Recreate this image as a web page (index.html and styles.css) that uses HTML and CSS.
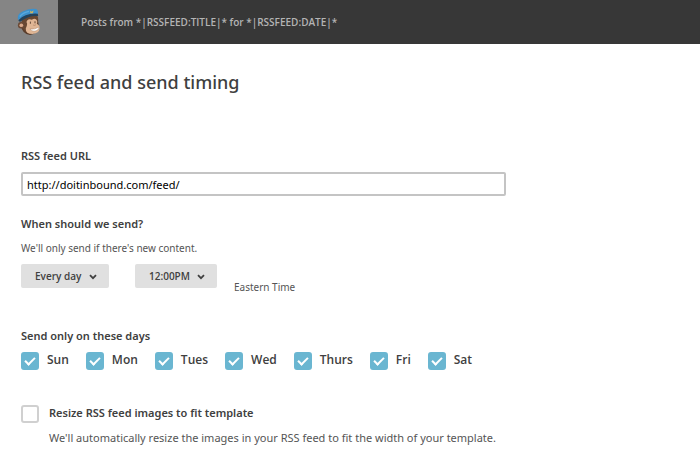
FILE: index.html
```html
<!DOCTYPE html>
<html lang="en">
<head>
<meta charset="utf-8">
<title>RSS feed and send timing</title>
<link rel="stylesheet" href="styles.css">
</head>
<body>
<header class="topbar">
  <a class="brand" href="#" aria-label="Home">
    <svg class="brand-logo" viewBox="0 0 26 30" aria-hidden="true">
      <ellipse cx="14" cy="18.500" rx="9.500" ry="10.500" fill="#5b3e2c"/>
      <path d="M5 14L8 8L22 8Q24 12 22 18L10 26Q5 23 5 14Z" fill="#684832"/>
      <circle cx="4.500" cy="18.500" r="3.500" fill="#6b4a36"/>
      <circle cx="4.700" cy="18.500" r="2" fill="#d9a98a"/>
      <path d="M11 13.500Q13 11 16 12.500Q20 10 21.500 13Q22.500 15 21.500 17Q25 19 24.500 22Q24 27 17 28Q9 28 9.500 22Q11 19 11 17Q9.500 15 11 13.500Z" fill="#e0b695"/>
      <path d="M14 22.500Q19 23.500 24 20.500Q23.500 24.500 18.500 25Q15.500 25 14 22.500Z" fill="#fff" stroke="#9a7052" stroke-width=".4"/>
      <path d="M14.500 15V16.500M19.500 14.600V16" stroke="#5b4232" stroke-width="1" stroke-linecap="round"/>
      <path d="M17.500 18.300Q19 19 20.500 18" fill="none" stroke="#9a7052" stroke-width=".6"/>
      <path d="M1 12Q0 6 6 3.500Q14-.5 21 1Q23.500 3 22.500 7Q12 5.500 4 14Z" fill="#3d91cc"/>
      <path d="M3 9Q7 4.500 13 3.500" fill="none" stroke="#5aa9dd" stroke-width="1.500"/>
      <path d="M1.500 13Q9 5 22.500 6L23 8.500Q12 7.500 4 14.500Q2 15 1.500 13Z" fill="#24435c"/>
      <path d="M14 2.500L15.500 4L18 2.500L17 5.500H14.500Z" fill="#d3b458"/>
    </svg>
  </a>
  <p class="campaign">Posts from *|RSSFEED:TITLE|* for *|RSSFEED:DATE|*</p>
</header>
<main class="page">
  <h1 class="title">RSS feed and send timing</h1>
  <form class="form">
    <div class="field">
      <label class="label" for="url">RSS feed URL</label>
      <input class="text-input" id="url" type="text" value="http://doitinbound.com/feed/">
    </div>
    <section class="timing">
      <h2 class="label">When should we send?</h2>
      <p class="hint">We'll only send if there's new content.</p>
      <div class="selects">
        <div class="select-wrap">
          <select class="select" aria-label="Frequency"><option>Every day</option></select>
          <svg class="chevron" viewBox="0 0 8 6" aria-hidden="true"><path d="M1 1.200L4 4.200L7 1.200"/></svg>
        </div>
        <div class="select-wrap">
          <select class="select" aria-label="Time"><option>12:00PM</option></select>
          <svg class="chevron" viewBox="0 0 8 6" aria-hidden="true"><path d="M1 1.200L4 4.200L7 1.200"/></svg>
        </div>
        <span class="zone">Eastern Time</span>
      </div>
    </section>
    <fieldset class="days">
      <legend class="label">Send only on these days</legend>
      <div class="day-list">
        <label class="day"><input class="check" type="checkbox" checked>Sun</label>
        <label class="day"><input class="check" type="checkbox" checked>Mon</label>
        <label class="day"><input class="check" type="checkbox" checked>Tues</label>
        <label class="day"><input class="check" type="checkbox" checked>Wed</label>
        <label class="day"><input class="check" type="checkbox" checked>Thurs</label>
        <label class="day"><input class="check" type="checkbox" checked>Fri</label>
        <label class="day"><input class="check" type="checkbox" checked>Sat</label>
      </div>
    </fieldset>
    <div class="resize">
      <input class="check" id="resize" type="checkbox" aria-describedby="resize-note">
      <div>
        <label class="label" for="resize">Resize RSS feed images to fit template</label>
        <p class="note" id="resize-note">We'll automatically resize the images in your RSS feed to fit the width of your template.</p>
      </div>
    </div>
  </form>
</main>
</body>
</html>
```
FILE: styles.css
```css
*,
*::before {
  box-sizing: border-box;
}

body {
  margin: 0;
  background: #fff;
  color: #404040;
  font: 11px/20px "Noto Sans", "Open Sans", sans-serif;
}

h1, h2, p, fieldset, legend {
  margin: 0;
  padding: 0;
  border: 0;
}

.topbar {
  display: flex;
  align-items: stretch;
  height: 44px;
  background: #373737;
}

.brand {
  display: flex;
  align-items: center;
  justify-content: center;
  width: 58px;
  background: #858585;
}

.brand-logo {
  width: 24px;
  height: 28px;
}

.campaign {
  padding: 12px 23px;
  color: #b4b4b4;
  font-family: "Open Sans", sans-serif;
  font-size: 10px;
  font-weight: 600;
}

.page {
  padding: 24px 21px 12px;
}

.title {
  font-size: 18px;
  font-weight: 500;
  line-height: 28px;
}

.form {
  margin-top: 50px;
}

.label {
  display: block;
  font-size: 11px;
  font-weight: 600;
  line-height: 20px;
}

.text-input {
  display: block;
  width: 100%;
  max-width: 485px;
  height: 24px;
  margin-top: 6px;
  padding: 0 4px;
  border: 2px solid #c4c4c4;
  border-radius: 2px;
  background: #fff;
  color: #000;
  font: inherit;
}

.timing {
  margin-top: 18px;
}

.hint {
  margin-top: 4px;
  color: #555;
  font-size: 10px;
}

.selects {
  display: flex;
  align-items: flex-start;
  margin-top: 6px;
}

.select-wrap {
  position: relative;
  margin-right: 26px;
}

.select-wrap + .select-wrap {
  margin-right: 17px;
}

.select {
  display: block;
  height: 24px;
  padding: 0 27px 0 14px;
  border: 0;
  border-radius: 2px;
  appearance: none;
  background: #e0e0e0;
  color: #404040;
  font: 600 10px/24px "Open Sans", sans-serif;
}

.chevron {
  position: absolute;
  top: 10px;
  right: 12px;
  width: 8px;
  height: 6px;
  fill: none;
  stroke: #404040;
  stroke-width: 1.8;
  pointer-events: none;
}

.zone {
  margin-top: 13px;
  color: #555;
  font-size: 10px;
}

.days {
  margin-top: 29px;
}

.day-list {
  display: flex;
  flex-wrap: wrap;
  gap: 17px;
  margin-top: 4px;
}

.day {
  display: flex;
  gap: 8px;
  font: 600 12px/20px "Open Sans", sans-serif;
}

.check {
  flex: none;
  width: 18px;
  height: 18px;
  margin: 2px 0 0;
  border: 2px solid #d0d0d0;
  border-radius: 3px;
  appearance: none;
  background: #fff;
}

.check:checked {
  display: grid;
  place-items: center;
  border-color: #6ab6d1;
  background: #6ab6d1;
}

.check:checked::before {
  width: 10px;
  height: 6px;
  margin-bottom: 2px;
  border: solid #fff;
  border-width: 0 0 2px 2px;
  content: "";
  transform: rotate(-45deg);
}

.resize {
  display: flex;
  gap: 10px;
  margin-top: 33px;
}

.note {
  margin-top: 5px;
  color: #555;
}
```
